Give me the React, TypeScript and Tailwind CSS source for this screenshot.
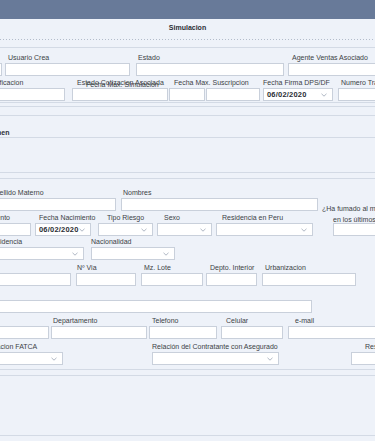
import type { ReactNode } from 'react';

type FieldProps = {
  className: string;
  labelClass?: string;
  label?: ReactNode;
  kind?: 'input' | 'select' | 'date';
  overlay?: string;
};

function Chevron() {
  return (
    <svg width="6" height="4" viewBox="0 0 6 4" className="shrink-0">
      <path d="M0.5 0.8 L3 3.2 L5.5 0.8" fill="none" stroke="#9ba5b4" strokeWidth="0.8" />
    </svg>
  );
}

function Field({ className, labelClass = '', label = '', kind = 'input', overlay }: FieldProps) {
  return (
    <div className={`relative flex shrink-0 flex-col ${className}`}>
      <div className={`h-[9px] whitespace-nowrap text-[7px] leading-[9px] text-[#3c3f45] ${labelClass}`}>{label}</div>
      {overlay && (
        <div className="absolute left-[14px] top-[2px] whitespace-nowrap text-[7px] leading-[9px] text-[#3c3f45]">{overlay}</div>
      )}
      <div className="mt-[1px] flex h-[13px] items-center justify-between border border-[#c9d0db] bg-white pl-[3px] pr-[5px]">
        {kind === 'date' && <span className="text-[7.5px] font-bold tracking-[0.2px] text-[#2a2d33]">06/02/2020</span>}
        {kind !== 'input' && <span />}
        {kind !== 'input' && <Chevron />}
      </div>
    </div>
  );
}

function Row({ children, className = '' }: { children: ReactNode; className?: string }) {
  return <div className={`flex h-[23px] items-end ${className}`}>{children}</div>;
}

export default function App() {
  return (
    <div className="h-[441px] w-[375px] overflow-hidden bg-[#eef2f9] font-['Liberation_Sans',Arial,sans-serif]">
      <div className="h-[19px] bg-[#687a99]" />
      <div className="flex h-[18px] items-center justify-center text-[7px] font-bold text-[#2c2f35]">Simulacion</div>
      <div className="mt-[2px] h-[1px] bg-[repeating-linear-gradient(90deg,#b3bccb_0_1px,transparent_1px_3px)]" />

      <div className="mt-[7px] border-y border-[#d3dae5] pb-[1px] pt-[5px]">
        <Row>
          <Field className="-ml-[40px] w-[42px]" labelClass="pl-[3px]" label="Codigo" />
          <Field className="ml-[3px] w-[125px]" labelClass="pl-[3px]" label="Usuario Crea" />
          <Field className="ml-[6px] w-[148px]" labelClass="pl-[2px]" label="Estado" />
          <Field className="ml-[4px] w-[100px]" labelClass="pl-[4px]" label="Agente Ventas Asociado" />
        </Row>
        <Row className="mt-[2px]">
          <Field className="-ml-[40px] w-[105px]" labelClass="pl-[3px]" label="Fecha Modificacion" />
          <Field
            className="ml-[7px] w-[96px]"
            labelClass="pl-[5px]"
            label="Estado Cotizacion Asociada"
            overlay="Fecha Max. Simulacion"
          />
          <Field className="ml-[1px] w-[36px]" labelClass="pl-[5px]" label="Fecha Max. Suscripcion" />
          <Field className="ml-[1px] w-[54px]" />
          <Field className="ml-[3px] w-[70px]" label="Fecha Firma DPS/DF" kind="date" />
          <Field className="ml-[5px] w-[80px]" labelClass="pl-[3px]" label="Numero Tramite" />
        </Row>
      </div>

      <div className="mt-[3px] h-[10px] border-y border-[#d3dae5]" />
      <div className="flex h-[22px] items-end border-b border-[#d3dae5]">
        <span className="-ml-[22px] text-[7px] font-bold leading-[9px] text-[#2c2f35]">Resumen</span>
      </div>
      <div className="h-[35px] border-b border-[#d3dae5]" />

      <div className="mt-[5px] border-y border-[#d3dae5] pb-[4px] pt-[9px]">
        <Row>
          <Field className="-ml-[12px] w-[128px]" labelClass="pl-[3px]" label="Apellido Materno" />
          <Field className="ml-[5px] w-[197px]" labelClass="pl-[2px]" label="Nombres" />
        </Row>
        <Row className="mt-[2px]">
          <Field className="-ml-[50px] w-[81px]" labelClass="pl-[9px]" label="Nro. Documento" />
          <Field className="ml-[4px] w-[56px]" labelClass="pl-[4px]" label="Fecha Nacimiento" kind="date" />
          <Field className="ml-[7px] w-[55px]" labelClass="pl-[9px]" label="Tipo Riesgo" kind="select" />
          <Field className="ml-[4px] w-[55px]" labelClass="pl-[7px]" label="Sexo" kind="select" />
          <Field className="ml-[4px] w-[97px]" labelClass="pl-[6px]" label="Residencia en Peru" kind="select" />
          <div className="ml-[20px] flex w-[80px] shrink-0 flex-col">
            <div className="-mb-[3px] -ml-[11px] whitespace-nowrap text-[7px] leading-[11px] text-[#3c3f45]">
              <div>¿Ha fumado al menos un cigarrillo</div>
              <div className="pl-[11px]">en los últimos 12 meses?</div>
            </div>
            <div className="mt-[1px] h-[13px] border border-[#c9d0db] bg-white" />
          </div>
        </Row>
        <Row className="mt-[1px]">
          <Field className="-ml-[32px] w-[116px]" labelClass="pl-[4px]" label="Pais Residencia" kind="select" />
          <Field className="ml-[7px] w-[84px]" label="Nacionalidad" kind="select" />
        </Row>
        <Row className="mt-[3px]">
          <Field className="-ml-[60px] w-[131px]" labelClass="pl-[3px]" label="Direccion" />
          <Field className="ml-[5px] w-[60px]" labelClass="pl-[1px]" label="Nº Via" />
          <Field className="ml-[5px] w-[62px]" labelClass="pl-[3px]" label="Mz. Lote" />
          <Field className="ml-[3px] w-[51px]" labelClass="pl-[4px]" label="Depto. Interior" />
          <Field className="ml-[5px] w-[94px]" labelClass="pl-[3px]" label="Urbanizacion" />
        </Row>
        <Row className="mt-[4px]">
          <Field className="-ml-[40px] w-[352px]" labelClass="pl-[3px]" label="" />
        </Row>
        <Row className="mt-[3px]">
          <Field className="-ml-[60px] w-[109px]" labelClass="pl-[3px]" label="Distrito" />
          <Field className="ml-[2px] w-[96px]" labelClass="pl-[2px]" label="Departamento" />
          <Field className="ml-[2px] w-[68px]" labelClass="pl-[3px]" label="Telefono" />
          <Field className="ml-[4px] w-[62px]" labelClass="pl-[5px]" label="Celular" />
          <Field className="ml-[5px] w-[100px]" labelClass="pl-[7px]" label="e-mail" />
        </Row>
        <Row className="mt-[3px]">
          <Field className="-ml-[30px] w-[93px]" labelClass="pl-[4px]" label="Clasificacion FATCA" kind="select" />
          <Field className="ml-[89px] w-[127px]" label="Relación del Contratante con Asegurado" kind="select" />
          <Field className="ml-[72px] w-[60px]" labelClass="pl-[14px]" label="Residencia Fiscal" />
        </Row>
      </div>

      <div className="mt-[5px] h-[61px] border-y border-[#d3dae5]" />
    </div>
  );
}
